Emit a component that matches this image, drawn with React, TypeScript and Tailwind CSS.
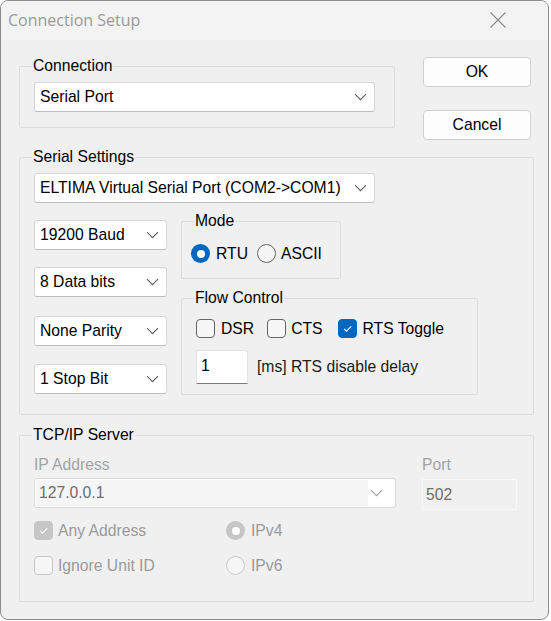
import React from "react";

const ui = "font-['Liberation_Sans',Arial,sans-serif] text-[15.7px] leading-[18px]";

function Chevron({ color = "#606060" }: { color?: string }) {
  return (
    <svg width="13" height="8" viewBox="0 0 13 8" fill="none">
      <path d="M1 1.2l5.5 5.5 5.5-5.5" stroke={color} strokeWidth="1.1" />
    </svg>
  );
}

function Combo({ value, className = "" }: { value: string; className?: string }) {
  return (
    <div
      className={`flex h-[30px] items-center justify-between rounded-[3px] border border-[#d6d6d6] border-b-[#bdbdbd] bg-white pl-[5px] pr-[7px] text-black ${className}`}
    >
      <span>{value}</span>
      <Chevron />
    </div>
  );
}

function Group({
  label,
  className = "",
  children,
}: {
  label: string;
  className?: string;
  children: React.ReactNode;
}) {
  return (
    <div className={`relative rounded-[2px] border border-[#dcdcdc] ${className}`}>
      <span className="absolute left-[12px] top-[-10px] bg-[#f0f0f0] px-[1px] text-black">{label}</span>
      {children}
    </div>
  );
}

function Check({
  checked = false,
  disabled = false,
  className = "",
}: {
  checked?: boolean;
  disabled?: boolean;
  className?: string;
}) {
  let box = "border border-[#646464] bg-[#f7f7f7]";
  if (checked && !disabled) box = "bg-[#0067c0] border border-[#0067c0]";
  if (checked && disabled) box = "bg-[#c6c6c6] border border-[#c6c6c6]";
  if (!checked && disabled) box = "border border-[#c6c6c6] bg-[#f6f6f6]";
  return (
    <span className={`flex h-[19px] w-[19px] shrink-0 items-center justify-center rounded-[4px] ${box} ${className}`}>
      {checked && (
        <svg width="13" height="13" viewBox="0 0 13 13" fill="none">
          <path d="M3 6.8l2.4 2.4 4.8-4.9" stroke="white" strokeWidth="1.1" />
        </svg>
      )}
    </span>
  );
}

function Radio({
  checked = false,
  disabled = false,
  className = "",
}: {
  checked?: boolean;
  disabled?: boolean;
  className?: string;
}) {
  if (checked) {
    return (
      <span
        className={`flex h-[19px] w-[19px] shrink-0 items-center justify-center rounded-full ${
          disabled ? "bg-[#c6c6c6]" : "bg-[#0067c0]"
        } ${className}`}
      >
        <span className="h-[8px] w-[8px] rounded-full bg-white" />
      </span>
    );
  }
  return (
    <span
      className={`block h-[19px] w-[19px] shrink-0 rounded-full border ${
        disabled ? "border-[#c9c9c9] bg-[#f6f6f6]" : "border-[#646464] bg-[#f5f5f5]"
      } ${className}`}
    />
  );
}

function Button({ children }: { children: React.ReactNode }) {
  return (
    <div className="flex h-[30px] w-[108px] items-center justify-center rounded-[4px] border border-[#d0d0d0] bg-[#fdfdfd] text-black">
      {children}
    </div>
  );
}

export default function App() {
  return (
    <div className={`h-[621px] w-[551px] bg-white ${ui}`}>
      <div className="flex h-[620px] w-[549px] flex-col overflow-hidden rounded-[8px] border border-[#8c8c8c] bg-[#f0f0f0]">
        {/* title bar */}
        <div className="flex h-[39px] shrink-0 items-center justify-between bg-[#f3f3f3] pb-[1px] pl-[7px] pr-[42px]">
          <span className="font-['Open_Sans',sans-serif] text-[16px] text-[#9a9a9a]">Connection Setup</span>
          <svg width="16" height="16" viewBox="0 0 16 16" fill="none">
            <path d="M0.5 0.5l15 15M15.5 0.5l-15 15" stroke="#8a8a8a" strokeWidth="1.1" />
          </svg>
        </div>

        <div className="pl-[18px]">
          {/* connection + buttons */}
          <div className="flex items-start pt-[17px]">
            <Group label="Connection" className="mt-[9px] w-[376px] pb-[15px] pl-[14px] pr-[19px] pt-[15px]">
              <Combo value="Serial Port" />
            </Group>
            <div className="ml-[28px] flex flex-col gap-[23px]">
              <Button>OK</Button>
              <Button>Cancel</Button>
            </div>
          </div>

          {/* serial settings */}
          <Group label="Serial Settings" className="mt-[17px] w-[515px] pb-[19px] pl-[14px] pt-[15px]">
            <Combo value="ELTIMA Virtual Serial Port (COM2->COM1)" className="w-[341px]" />
            <div className="mt-[17px] flex items-start">
              <div className="flex w-[133px] flex-col">
                <Combo value="19200 Baud" />
                <Combo value="8 Data bits" className="mt-[17px]" />
                <Combo value="None Parity" className="mt-[19px]" />
                <Combo value="1 Stop Bit" className="mt-[18px]" />
              </div>
              <div className="ml-[14px] flex flex-col">
                <Group label="Mode" className="mt-[1px] h-[58px] w-[160px] pl-[9px] pt-[22px]">
                  <div className="flex items-center">
                    <Radio checked />
                    <span className="ml-[6px]">RTU</span>
                    <Radio className="ml-[9px]" />
                    <span className="ml-[5px]">ASCII</span>
                  </div>
                </Group>
                <Group label="Flow Control" className="mt-[19px] h-[97px] w-[297px] pl-[14px] pt-[20px]">
                  <div className="flex items-center">
                    <Check />
                    <span className="ml-[6px]">DSR</span>
                    <Check className="ml-[13px]" />
                    <span className="ml-[5px]">CTS</span>
                    <Check checked className="ml-[15px]" />
                    <span className="ml-[6px]">RTS Toggle</span>
                  </div>
                  <div className="mt-[12px] flex items-center">
                    <div className="h-[34px] w-[52px] rounded-t-[3px] border border-[#e3e3e3] border-b-[#7a7a7a] bg-white pl-[4px] pt-[6px]">
                      1
                    </div>
                    <span className="ml-[9px] text-[#1a1a1a]">[ms] RTS disable delay</span>
                  </div>
                </Group>
              </div>
            </div>
          </Group>

          {/* tcp/ip */}
          <Group label="TCP/IP Server" className="mt-[20px] h-[167px] w-[515px] pl-[14px] pt-[20px]">
            <div className="flex items-start">
              <div className="flex w-[362px] flex-col">
                <span className="text-[#a3a3a3]">IP Address</span>
                <div className="mt-[4px] flex h-[30px] items-center justify-between rounded-[3px] border border-[#dadada] bg-white p-[1px] pr-[12px]">
                  <div className="flex h-full w-[332px] items-center bg-[#f5f5f5] pl-[3px] text-[#6d6d6d]">127.0.0.1</div>
                  <Chevron color="#a0a0a0" />
                </div>
              </div>
              <div className="ml-[26px] flex flex-col">
                <span className="text-[#a3a3a3]">Port</span>
                <div className="mt-[5px] flex h-[31px] w-[95px] items-center border border-[#f8f8f8] bg-[#f0f0f0] pl-[3px] text-[#6d6d6d]">
                  502
                </div>
              </div>
            </div>
            <div className="mt-[11px] grid grid-cols-[192px_1fr] gap-y-[16px] text-[#9a9a9a]">
              <div className="flex items-center">
                <Check checked disabled />
                <span className="ml-[5px]">Any Address</span>
              </div>
              <div className="flex items-center">
                <Radio checked disabled />
                <span className="ml-[6px]">IPv4</span>
              </div>
              <div className="flex items-center">
                <Check disabled />
                <span className="ml-[5px]">Ignore Unit ID</span>
              </div>
              <div className="flex items-center">
                <Radio disabled />
                <span className="ml-[6px]">IPv6</span>
              </div>
            </div>
          </Group>
        </div>
      </div>
    </div>
  );
}
